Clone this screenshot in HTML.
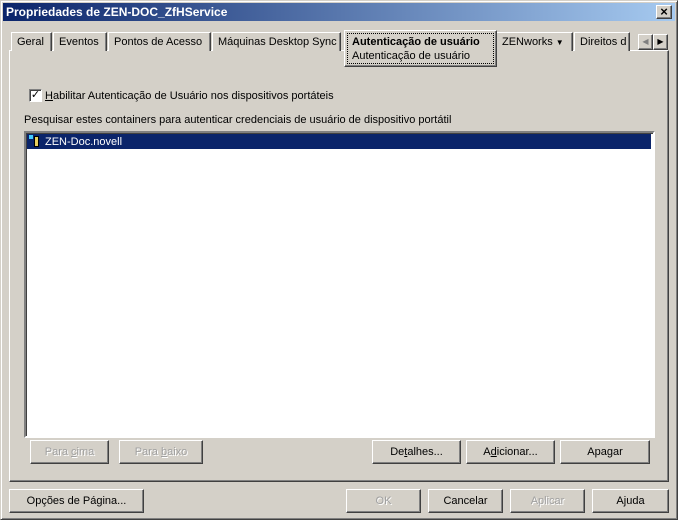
<!DOCTYPE html>
<html><head><meta charset="utf-8"><style>
body{margin:0;width:678px;height:520px;background:#d4d0c8;font-family:"Liberation Sans",Arial,sans-serif;font-size:11px;color:#000;position:relative;overflow:hidden}
.a{position:absolute}
.win{left:0;top:0;width:676px;height:518px;border:1px solid;border-color:#d4d0c8 #404040 #404040 #d4d0c8;box-shadow:inset 1px 1px #fff,inset -1px -1px #808080}
.title{left:3px;top:3px;width:672px;height:18px;background:linear-gradient(90deg,#0a246a,#a6caf0);color:#fff;font-weight:bold;font-size:12px;line-height:18px;padding-left:3px;box-sizing:border-box}
.rb{border:1px solid;border-color:#fff #404040 #404040 #fff;box-shadow:inset -1px -1px #808080;box-sizing:border-box;text-align:center;background:#d4d0c8}
.tab{top:32px;height:19px;border:1px solid;border-color:#fff #404040 transparent #fff;border-bottom:none;box-shadow:inset -1px 0 #808080;box-sizing:border-box;line-height:19px;padding-left:5px;background:#d4d0c8}
.btn{height:24px;line-height:23px}
.dis{color:#a0a0a0;text-shadow:1px 1px #fff}
</style></head><body>
<div class="a win"></div>
<div class="a title">Propriedades de ZEN-DOC_ZfHService</div>
<div class="a rb" style="left:656px;top:5px;width:16px;height:14px;line-height:11px;font-size:13px;font-weight:bold">×</div>
<div class="a" style="left:9px;top:50px;width:660px;height:432px;border:1px solid;border-color:#fff #404040 #404040 #fff;box-shadow:inset -1px -1px #808080;box-sizing:border-box"></div>
<div class="a tab" style="left:11px;width:41px">Geral</div>
<div class="a tab" style="left:53px;width:54px">Eventos</div>
<div class="a tab" style="left:108px;width:103px">Pontos de Acesso</div>
<div class="a tab" style="left:212px;width:129px">Máquinas Desktop Sync</div>
<div class="a tab" style="left:496px;width:77px">ZENworks <span style="font-size:8px">▼</span></div>
<div class="a tab" style="left:574px;width:56px;overflow:hidden;white-space:nowrap">Direitos d</div>
<div class="a" style="left:344px;top:30px;width:153px;height:37px;background:#d4d0c8;border:1px solid;border-color:#fff #404040 #404040 #fff;box-shadow:inset -1px -1px #808080;box-sizing:border-box"></div>
<div class="a" style="left:347px;top:33px;width:147px;height:31px;border:1px dotted #000;box-sizing:border-box;padding-left:4px;padding-top:1px;line-height:14px"><b>Autenticação de usuário</b><br>Autenticação de usuário</div>
<div class="a rb" style="left:638px;top:34px;width:15px;height:16px;font-size:8px;line-height:14px;color:#808080">◀</div>
<div class="a rb" style="left:653px;top:34px;width:15px;height:16px;font-size:8px;line-height:14px">▶</div>
<div class="a" style="left:29px;top:89px;width:13px;height:13px;background:#fff;border:1px solid;border-color:#808080 #fff #fff #808080;box-shadow:inset 1px 1px #404040;box-sizing:border-box;font-size:11px;line-height:11px;text-align:center">✓</div>
<div class="a" style="left:45px;top:90px"><u>H</u>abilitar Autenticação de Usuário nos dispositivos portáteis</div>
<div class="a" style="left:24px;top:114px">Pesquisar estes containers para autenticar credenciais de usuário de dispositivo portátil</div>
<div class="a" style="left:24px;top:131px;width:631px;height:307px;background:#fff;border:2px solid;border-color:#808080 #fff #fff #808080;box-shadow:inset 1px 1px #404040;box-sizing:border-box"></div>
<div class="a" style="left:27px;top:134px;width:624px;height:15px;background:#0a246a;color:#fff;line-height:16px"><span style="display:inline-block;width:4px;height:4px;background:#4cf;margin-left:2px;vertical-align:6px"></span><span style="display:inline-block;width:5px;height:11px;background:#e8d060;border:1px solid #000;margin:0 6px 0 1px;vertical-align:-2px;box-sizing:border-box"></span>ZEN-Doc.novell</div>
<div class="a rb btn dis" style="left:30px;top:440px;width:79px">Para <u>c</u>ima</div>
<div class="a rb btn dis" style="left:119px;top:440px;width:84px">Para <u>b</u>aixo</div>
<div class="a rb btn" style="left:372px;top:440px;width:89px">De<u>t</u>alhes...</div>
<div class="a rb btn" style="left:466px;top:440px;width:89px">A<u>d</u>icionar...</div>
<div class="a rb btn" style="left:560px;top:440px;width:90px">Apa<u>g</u>ar</div>
<div class="a rb btn" style="left:9px;top:489px;width:135px">Opções de Pá<u>g</u>ina...</div>
<div class="a rb btn dis" style="left:346px;top:489px;width:75px">OK</div>
<div class="a rb btn" style="left:428px;top:489px;width:75px">Cancelar</div>
<div class="a rb btn dis" style="left:510px;top:489px;width:75px">Aplicar</div>
<div class="a rb btn" style="left:592px;top:489px;width:77px">A<u>j</u>uda</div>
</body></html>
